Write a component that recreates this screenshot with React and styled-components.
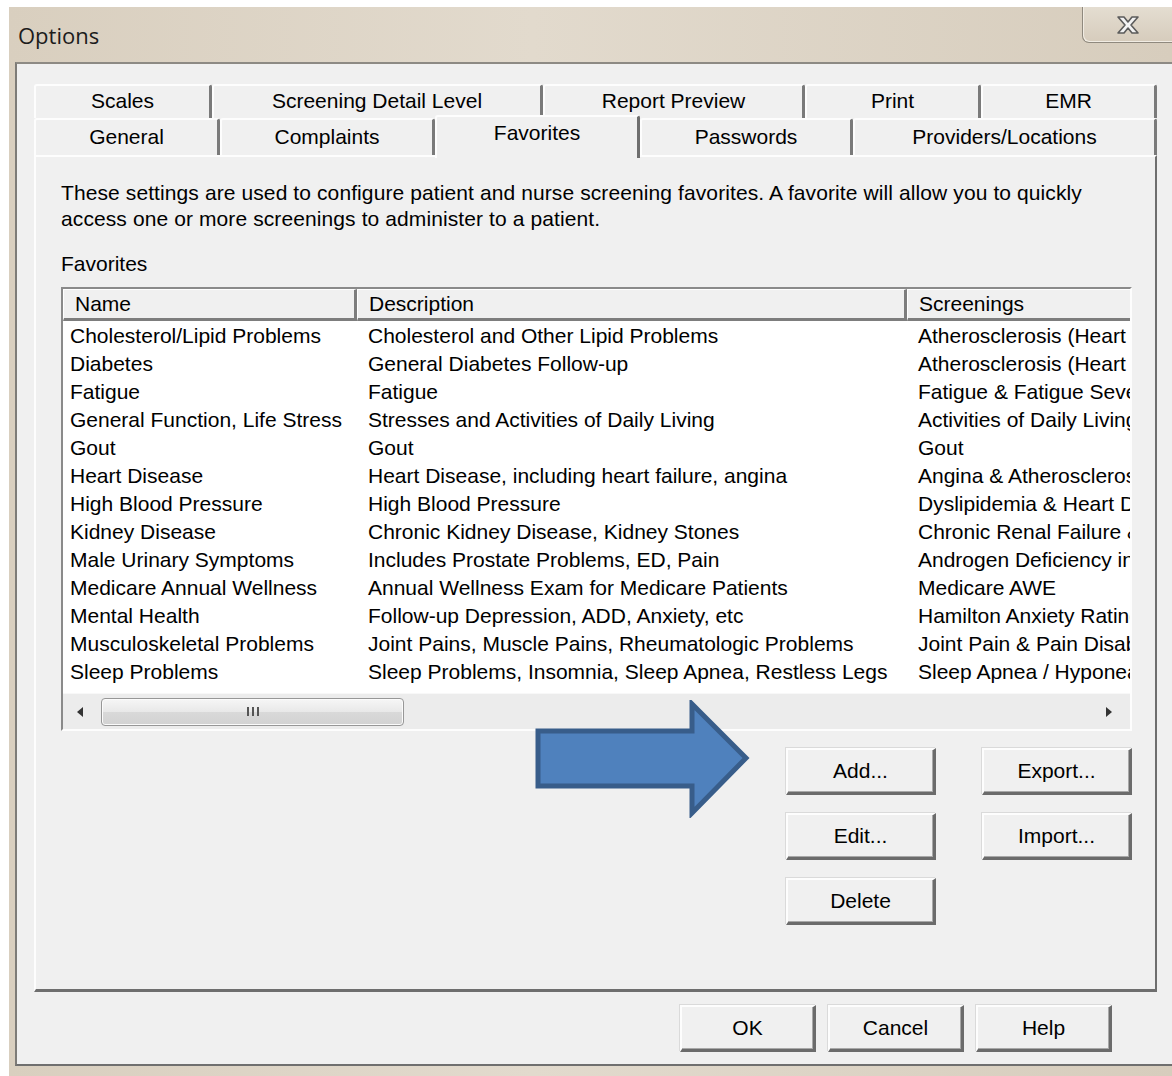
import styled, { createGlobalStyle } from 'styled-components'

const GlobalStyle = createGlobalStyle`
  html, body {
    margin: 0;
    padding: 0;
    background: #fff;
  }
  body {
    font-family: "Liberation Sans", Arial, sans-serif;
    color: #000;
  }
`

const topTabs = [
    { label: 'Scales', w: 178 },
    { label: 'Screening Detail Level', w: 331 },
    { label: 'Report Preview', w: 262 },
    { label: 'Print', w: 176 },
    { label: 'EMR', w: 176 },
]

const frontTabs = [
    { label: 'General', w: 186 },
    { label: 'Complaints', w: 215 },
    { label: 'Favorites', w: 205, active: true },
    { label: 'Passwords', w: 213 },
    { label: 'Providers/Locations', w: 304 },
]

const favorites = [
    ['Cholesterol/Lipid Problems', 'Cholesterol and Other Lipid Problems', 'Atherosclerosis (Heart Disease)'],
    ['Diabetes', 'General Diabetes Follow-up', 'Atherosclerosis (Heart Disease)'],
    ['Fatigue', 'Fatigue', 'Fatigue & Fatigue Severity'],
    ['General Function, Life Stress', 'Stresses and Activities of Daily Living', 'Activities of Daily Living'],
    ['Gout', 'Gout', 'Gout'],
    ['Heart Disease', 'Heart Disease, including heart failure, angina', 'Angina & Atherosclerosis'],
    ['High Blood Pressure', 'High Blood Pressure', 'Dyslipidemia & Heart Disease'],
    ['Kidney Disease', 'Chronic Kidney Disease, Kidney Stones', 'Chronic Renal Failure & Stones'],
    ['Male Urinary Symptoms', 'Includes Prostate Problems, ED, Pain', 'Androgen Deficiency in Males'],
    ['Medicare Annual Wellness', 'Annual Wellness Exam for Medicare Patients', 'Medicare AWE'],
    ['Mental Health', 'Follow-up Depression, ADD, Anxiety, etc', 'Hamilton Anxiety Rating'],
    ['Musculoskeletal Problems', 'Joint Pains, Muscle Pains, Rheumatologic Problems', 'Joint Pain & Pain Disability'],
    ['Sleep Problems', 'Sleep Problems, Insomnia, Sleep Apnea, Restless Legs', 'Sleep Apnea / Hyponea'],
]

const CloseGlyph = () => (
    <svg width="26" height="20" viewBox="0 0 26 20">
        <path
            d="M3 2 H9 L13 7 L17 2 H23 L16 10 L23 18 H17 L13 13 L9 18 H3 L10 10 Z"
            fill="#f2f2f2"
            stroke="#5b5b5b"
            strokeWidth="1.6"
            strokeLinejoin="round"
        />
    </svg>
)

const BlueArrow = () => (
    <svg width="215" height="118" viewBox="0 0 215 118">
        <polygon
            points="3,31 157,31 157,4 211,58 157,113 157,86 3,86"
            fill="#4f81bd"
            stroke="#385d8a"
            strokeWidth="5"
        />
    </svg>
)

const Options = () => {
    return (
        <Page>
            <GlobalStyle />
            <Frame>
                <TitleBar>
                    <Title>Options</Title>
                    <CloseButton><CloseGlyph /></CloseButton>
                </TitleBar>
                <Client>
                    <Tabs>
                        <TabRow>
                            {topTabs.map(t => (
                                <Tab key={t.label} $w={t.w}>{t.label}</Tab>
                            ))}
                        </TabRow>
                        <TabRow $front>
                            {frontTabs.map(t => (
                                <Tab key={t.label} $w={t.w} $active={t.active}>{t.label}</Tab>
                            ))}
                        </TabRow>
                    </Tabs>
                    <Panel>
                        <Intro>
                            These settings are used to configure patient and nurse screening favorites. A favorite will allow you to quickly
                            access one or more screenings to administer to a patient.
                        </Intro>
                        <Label>Favorites</Label>
                        <ListView>
                            <Header>
                                <HeaderCell>Name</HeaderCell>
                                <HeaderCell>Description</HeaderCell>
                                <HeaderCell>Screenings</HeaderCell>
                            </Header>
                            <Body>
                                {favorites.map(row => (
                                    <Row key={row[0]}>
                                        <Cell>{row[0]}</Cell>
                                        <Cell>{row[1]}</Cell>
                                        <Cell>{row[2]}</Cell>
                                    </Row>
                                ))}
                            </Body>
                            <ScrollBar>
                                <ScrollArrow><Triangle $dir="left" /></ScrollArrow>
                                <Thumb><Grip><i /><i /><i /></Grip></Thumb>
                                <ScrollArrow $end><Triangle $dir="right" /></ScrollArrow>
                            </ScrollBar>
                        </ListView>
                        <Actions>
                            <ArrowMark><BlueArrow /></ArrowMark>
                            <ButtonGrid>
                                <Button $w={150}>Add...</Button>
                                <Button $w={150}>Export...</Button>
                                <Button $w={150}>Edit...</Button>
                                <Button $w={150}>Import...</Button>
                                <Button $w={150}>Delete</Button>
                            </ButtonGrid>
                        </Actions>
                    </Panel>
                    <Footer>
                        <Button $w={136}>OK</Button>
                        <Button $w={136}>Cancel</Button>
                        <Button $w={136}>Help</Button>
                    </Footer>
                </Client>
            </Frame>
        </Page>
    )
}

export default Options

const Page = styled.div`
width: 1172px;
height: 1076px;
padding: 7px 0 0 9px;
box-sizing: border-box;
overflow: hidden;
`
const Frame = styled.div`
height: 100%;
display: flex;
flex-direction: column;
padding: 0 0 10px 6px;
box-sizing: border-box;
background: linear-gradient(90deg, #d9cfbf 0%, #e2dacd 45%, #d7cdbd 100%);
`
const TitleBar = styled.div`
height: 55px;
display: flex;
justify-content: space-between;
align-items: flex-start;
`
const Title = styled.div`
font-family: "Open Sans", "Noto Sans", sans-serif;
font-size: 22px;
color: #1c1c1c;
line-height: 56px;
padding-left: 3px;
`
const CloseButton = styled.div`
width: 90px;
height: 36px;
display: flex;
align-items: center;
justify-content: center;
box-sizing: border-box;
border-left: 1px solid #8f897e;
border-bottom: 1px solid #8f897e;
border-bottom-left-radius: 7px;
background: linear-gradient(#e4ddd1, #d6ccbc);
box-shadow: inset 1px -1px 0 #f1ece3;
`
const Client = styled.div`
flex: 1;
display: flex;
flex-direction: column;
background: #f0f0f0;
border-left: 2px solid #7d7b77;
border-top: 2px solid #8d8a84;
border-bottom: 2px solid #6f6f6f;
padding: 20px 15px 0 17px;
`
const Tabs = styled.div`
display: flex;
flex-direction: column;
position: relative;
z-index: 1;
`
const TabRow = styled.div`
display: flex;
height: ${p => (p.$front ? '37px' : '34px')};
`
const Tab = styled.div`
width: ${p => p.$w}px;
box-sizing: border-box;
display: flex;
align-items: center;
justify-content: center;
font-size: 21px;
background: #f0f0f0;
border-top: 2px solid #fdfdfd;
border-left: 2px solid #fdfdfd;
border-right: 3px solid #7a7a7a;
border-top-left-radius: 3px;
border-top-right-radius: 3px;
padding-bottom: 2px;
${p => p.$active && `
    margin-top: -3px;
    height: calc(100% + 6px);
    padding-bottom: 10px;
    border-right-color: #6e6e6e;
`}
`
const Panel = styled.div`
height: 837px;
box-sizing: border-box;
display: flex;
flex-direction: column;
padding: 23px 23px 0 25px;
border-top: 2px solid #fdfdfd;
border-left: 2px solid #fdfdfd;
border-right: 2px solid #6e6e6e;
border-bottom: 3px solid #6e6e6e;
`
const Intro = styled.p`
margin: 0;
font-size: 21px;
line-height: 26px;
letter-spacing: 0.1px;
`
const Label = styled.div`
margin-top: 19px;
font-size: 21px;
line-height: 26px;
`
const ListView = styled.div`
margin-top: 10px;
height: 444px;
box-sizing: border-box;
display: flex;
flex-direction: column;
background: #fff;
overflow: hidden;
border-top: 2px solid #8a8a8a;
border-left: 2px solid #8a8a8a;
border-right: 2px solid #fdfdfd;
border-bottom: 2px solid #fdfdfd;
`
const Header = styled.div`
display: grid;
grid-template-columns: 294px 550px 400px;
height: 32px;
flex-shrink: 0;
background: #f0f0f0;
`
const HeaderCell = styled.div`
box-sizing: border-box;
font-size: 21px;
line-height: 28px;
padding-left: 11px;
border-top: 1px solid #fff;
border-left: 1px solid #fff;
border-right: 3px solid #7d7d7d;
border-bottom: 3px solid #7d7d7d;
white-space: nowrap;
`
const Body = styled.div`
flex: 1;
padding-top: 1px;
`
const Row = styled.div`
display: grid;
grid-template-columns: 294px 550px 400px;
height: 28px;
`
const Cell = styled.div`
font-size: 21px;
line-height: 28px;
padding-left: 11px;
white-space: nowrap;
overflow: hidden;

&:first-child {
    padding-left: 7px;
}
`
const ScrollBar = styled.div`
height: 35px;
flex-shrink: 0;
display: flex;
align-items: center;
background: #ececec;
border-top: 1px solid #f8f8f8;
`
const ScrollArrow = styled.div`
width: 34px;
height: 100%;
display: flex;
align-items: center;
justify-content: center;
${p => p.$end && 'margin-left: auto; width: 42px;'}
`
const Triangle = styled.span`
width: 0;
height: 0;
border-top: 5px solid transparent;
border-bottom: 5px solid transparent;
${p => (p.$dir === 'left'
        ? 'border-right: 6px solid #333;'
        : 'border-left: 6px solid #333;')}
`
const Thumb = styled.div`
width: 303px;
height: 28px;
margin-left: 4px;
box-sizing: border-box;
display: flex;
align-items: center;
justify-content: center;
border: 1px solid #979797;
border-radius: 4px;
background: linear-gradient(#f6f6f6 0%, #e8e8e8 50%, #d9d9d9 51%, #d2d2d2 100%);
box-shadow: inset 0 0 0 1px #fbfbfb;
`
const Grip = styled.div`
display: flex;
gap: 3px;
& i {
    width: 2px;
    height: 9px;
    background: #555;
}
`
const Actions = styled.div`
position: relative;
display: flex;
justify-content: flex-end;
padding-top: 17px;
`
const ArrowMark = styled.div`
position: absolute;
left: 474px;
top: -31px;
line-height: 0;
pointer-events: none;
`
const ButtonGrid = styled.div`
display: grid;
grid-template-columns: 150px 150px;
grid-auto-rows: 47px;
column-gap: 46px;
row-gap: 18px;
`
const Button = styled.button`
width: ${p => p.$w}px;
height: 47px;
box-sizing: border-box;
padding: 0;
font-family: "Liberation Sans", Arial, sans-serif;
font-size: 21px;
color: #000;
background: #f0f0f0;
border-style: solid;
border-width: 2px 3px 3px 2px;
border-color: #fdfdfd #6b6b6b #6b6b6b #fdfdfd;
box-shadow: -1px -1px 0 #dadada, inset -1px -1px 0 #a8a8a8;
cursor: pointer;
`
const Footer = styled.div`
display: flex;
justify-content: flex-end;
gap: 12px;
padding: 13px 45px 0 0;
`
